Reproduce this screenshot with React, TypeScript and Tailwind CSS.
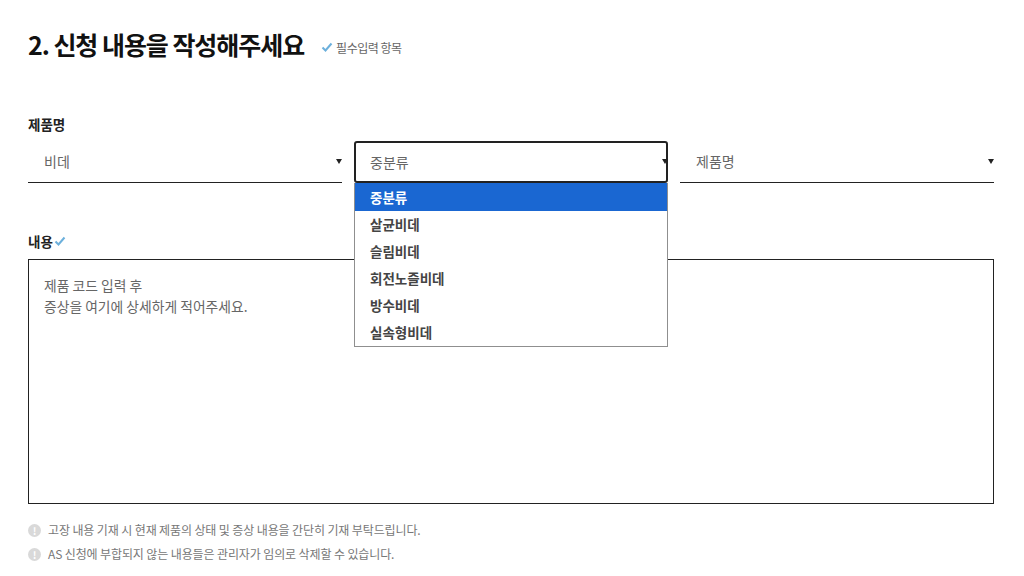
const checkPath = 'M1.5 6.5 L4.5 9.5 L10.5 2.5';

function Check({ className }: { className: string }) {
    return (
        <svg viewBox="0 0 12 12" className={className} fill="none" stroke="#6cb0dc" strokeWidth="2">
            <path d={checkPath} />
        </svg>
    );
}

function Arrow({ className }: { className: string }) {
    return <span className={`absolute top-[18px] w-0 h-0 border-x-[3.5px] border-x-transparent border-t-[5px] border-t-[#222] ${className}`} />;
}

function SelectBox({ label }: { label: string }) {
    return (
        <div className="relative h-[42px] flex items-center pl-[16px] border-b border-[#222] text-[14px] text-[#666]">
            {label}
            <Arrow className="right-0" />
        </div>
    );
}

const options = ['살균비데', '슬림비데', '회전노즐비데', '방수비데', '실속형비데'];

export default function App() {
    return (
        <div className="w-[1024px] h-[576px] overflow-hidden bg-white pl-[28px] pr-[30px] font-['Noto_Sans_CJK_KR','Noto_Sans',sans-serif]">
            <div className="flex items-center pt-[26px] h-[62px]">
                <h2 className="text-[25px] leading-[36px] font-bold text-[#111] tracking-[-1.05px]">2. 신청 내용을 작성해주세요</h2>
                <Check className="w-[12px] h-[12px] ml-[17px] mt-[5px]" />
                <span className="ml-[3px] mt-[7px] text-[12px] text-[#666] tracking-[-0.5px]">필수입력 항목</span>
            </div>

            <div className="mt-[53px] text-[13.5px] leading-[18px] font-bold text-[#222]">제품명</div>
            <div className="grid grid-cols-3 gap-[12px] mt-[8px]">
                <SelectBox label="비데" />
                <div className="relative h-[42px]">
                    <div className="h-full flex items-center pl-[14px] border-2 border-[#222] rounded-[3px] text-[14px] text-[#666]">
                        중분류
                    </div>
                    <Arrow className="right-0" />
                    <ul className="absolute z-10 left-0 right-0 top-[42px] h-[164px] bg-white border border-[#8f8f8f] border-t-0 text-[13.5px] font-bold text-[#444]">
                        <li className="h-[28px] flex items-center pl-[15px] bg-[#1a67d2] text-white">중분류</li>
                        {options.map((o) => (
                            <li key={o} className="h-[27px] flex items-center pl-[15px]">{o}</li>
                        ))}
                    </ul>
                </div>
                <SelectBox label="제품명" />
            </div>

            <div className="flex items-center mt-[49px] h-[18px] text-[13.5px] font-bold text-[#222]">
                내용
                <Check className="w-[12px] h-[12px] ml-[1px]" />
            </div>
            <div className="mt-[9px] h-[245px] border border-[#222] pl-[15px] pt-[15px] text-[13.8px] leading-[21px] text-[#666]">
                제품 코드 입력 후
                <br />
                증상을 여기에 상세하게 적어주세요.
            </div>

            <ul className="mt-[14px] text-[12px] leading-[24px] text-[#777] tracking-[-0.12px]">
                <Note text="고장 내용 기재 시 현재 제품의 상태 및 증상 내용을 간단히 기재 부탁드립니다." />
                <Note text="AS 신청에 부합되지 않는 내용들은 관리자가 임의로 삭제할 수 있습니다." />
            </ul>
        </div>
    );
}

function Note({ text }: { text: string }) {
    return (
        <li className="flex items-center">
            <span className="w-[13px] h-[13px] rounded-full bg-[#d9d9d9] text-white text-[10px] leading-[13px] font-bold text-center mr-[7px]">!</span>
            {text}
        </li>
    );
}
